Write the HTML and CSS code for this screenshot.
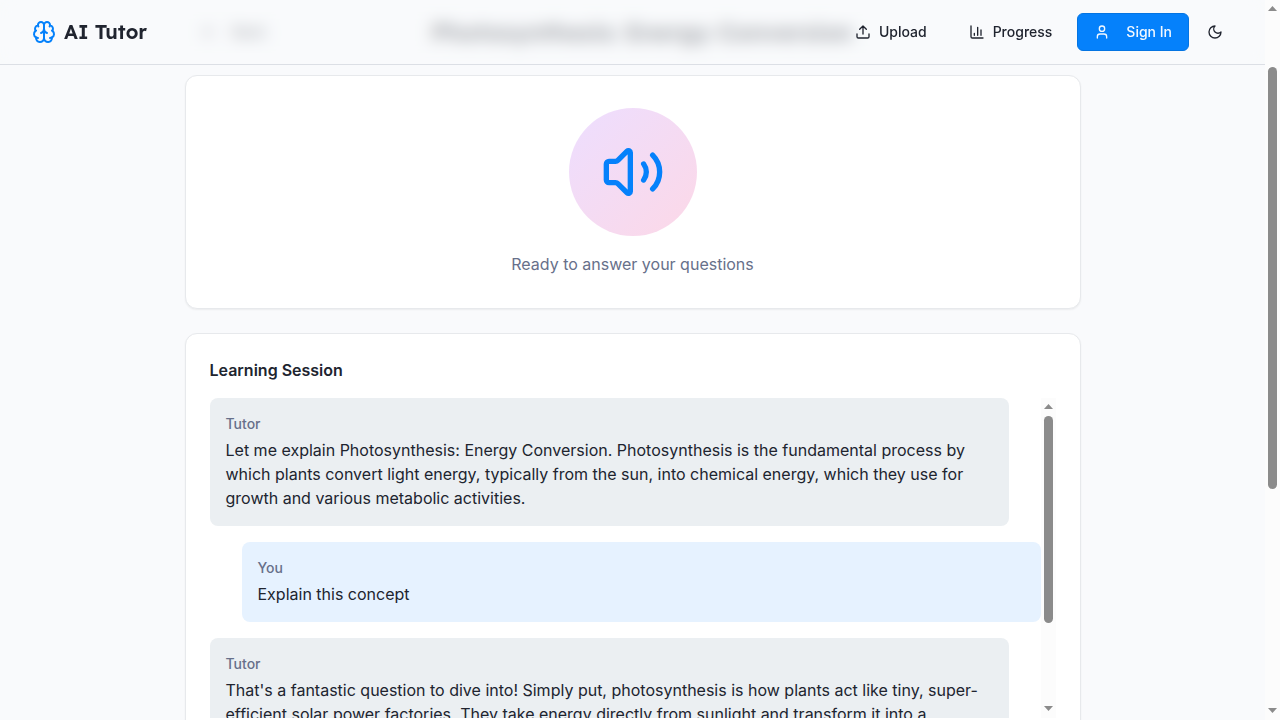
FILE: index.html
```html
<!DOCTYPE html>
<html lang="en">
<head>
<meta charset="utf-8">
<title>AI Tutor</title>
<link rel="stylesheet" href="styles.css">
</head>
<body>
<div class="window">
  <div class="page">
    <header class="header">
      <a class="brand">
        <svg class="icon brand-icon" viewBox="0 0 24 24"><path d="M12 5a3 3 0 1 0-5.997.125 4 4 0 0 0-2.526 5.77 4 4 0 0 0 .556 6.588A4 4 0 1 0 12 18Z"/><path d="M12 5a3 3 0 1 1 5.997.125 4 4 0 0 1 2.526 5.77 4 4 0 0 1-.556 6.588A4 4 0 1 1 12 18Z"/><path d="M15 13a4.5 4.5 0 0 1-3-4 4.5 4.5 0 0 1-3 4"/><path d="M17.599 6.5a3 3 0 0 0 .399-1.375"/><path d="M6.003 5.125A3 3 0 0 0 6.401 6.5"/><path d="M3.477 10.896a4 4 0 0 1 .585-.396"/><path d="M19.938 10.5a4 4 0 0 1 .585.396"/><path d="M6 18a4 4 0 0 1-1.967-.516"/><path d="M19.967 17.484A4 4 0 0 1 18 18"/></svg>
        <span class="brand-name">AI Tutor</span>
      </a>
      <nav class="nav">
        <a class="button"><svg class="icon" viewBox="0 0 24 24"><path d="M21 15v4a2 2 0 0 1-2 2H5a2 2 0 0 1-2-2v-4"/><path d="m17 8-5-5-5 5M12 3v12"/></svg>Upload</a>
        <a class="button"><svg class="icon" viewBox="0 0 24 24"><path d="M3 3v16a2 2 0 0 0 2 2h16"/><path d="M18 17V9M13 17V5M8 17v-3"/></svg>Progress</a>
        <a class="button primary"><svg class="icon" viewBox="0 0 24 24"><path d="M19 21v-2a4 4 0 0 0-4-4H9a4 4 0 0 0-4 4v2"/><circle cx="12" cy="7" r="4"/></svg>Sign In</a>
        <a class="theme"><svg class="icon" viewBox="0 0 24 24"><path d="M12 3a6 6 0 0 0 9 9 9 9 0 1 1-9-9Z"/></svg></a>
      </nav>
    </header>
    <main class="content">
      <div class="title-row">
        <a class="back"><svg class="icon" viewBox="0 0 24 24"><path d="m12 19-7-7 7-7M19 12H5"/></svg>Back</a>
        <h1 class="title">Photosynthesis: Energy Conversion</h1>
      </div>
      <section class="card status">
        <div class="speaker"><svg class="icon speaker-icon" viewBox="0 0 24 24"><path d="M11 4.702a.705.705 0 0 0-1.203-.498L6.413 7.587A1.4 1.4 0 0 1 5.416 8H3a1 1 0 0 0-1 1v6a1 1 0 0 0 1 1h2.416a1.4 1.4 0 0 1 .997.413l3.383 3.384A.705.705 0 0 0 11 19.298z"/><path d="M16 9a5 5 0 0 1 0 6"/><path d="M19.364 18.364a9 9 0 0 0 0-12.728"/></svg></div>
        <p class="status-text">Ready to answer your questions</p>
      </section>
      <section class="card session">
        <h2 class="session-title">Learning Session</h2>
        <div class="chat">
          <div class="messages">
            <div class="message tutor"><p class="author">Tutor</p><p class="text">Let me explain Photosynthesis: Energy Conversion. Photosynthesis is the fundamental process by which plants convert light energy, typically from the sun, into chemical energy, which they use for growth and various metabolic activities.</p></div>
            <div class="message you"><p class="author">You</p><p class="text">Explain this concept</p></div>
            <div class="message tutor"><p class="author">Tutor</p><p class="text">That's a fantastic question to dive into! Simply put, photosynthesis is how plants act like tiny, super-efficient solar power factories. They take energy directly from sunlight and transform it into a</p></div>
          </div>
          <div class="scrollbar chat-scrollbar"><i class="arrow up"></i><i class="thumb chat-thumb"></i><i class="arrow down"></i></div>
        </div>
      </section>
    </main>
  </div>
  <div class="scrollbar page-scrollbar"><i class="arrow up"></i><i class="thumb page-thumb"></i><i class="arrow down"></i></div>
</div>
</body>
</html>
```
FILE: styles.css
```css
* { box-sizing: border-box; }
body { margin: 0; font-family: Inter, "Liberation Sans", sans-serif; font-size: 16px; line-height: 24px; color: #20242f; background: #f9fafc; overflow: hidden; }
h1, h2, p { margin: 0; }
.window { display: flex; height: 720px; overflow: hidden; }
.page { flex: 1; min-width: 0; height: 720px; overflow: hidden; background: #f9fafc; }
.icon { width: 16px; height: 16px; flex: none; fill: none; stroke: currentColor; stroke-width: 2; stroke-linecap: round; stroke-linejoin: round; }
.header { position: sticky; top: 0; z-index: 2; display: flex; justify-content: space-between; align-items: center; height: 65px; padding: 0 32px; border-bottom: 1px solid #dcdfe5; background: rgba(249, 250, 252, .6); backdrop-filter: blur(8px); }
.brand { display: flex; align-items: center; gap: 8px; }
.brand-icon { width: 24px; height: 24px; color: #0581fb; }
.brand-name { font-family: Lexend, Inter, sans-serif; font-size: 20px; line-height: 28px; font-weight: 600; font-feature-settings: "cv08"; }
.nav { display: flex; align-items: center; gap: 8px; }
.button { display: flex; align-items: center; gap: 8px; height: 38px; padding: 0 16px; border: 1px solid transparent; border-radius: 6px; font-size: 14px; font-weight: 500; line-height: 20px; }
.primary { gap: 16px; color: #f2f8ff; background: #0581fb; border-color: #0474e2; }
.theme { display: flex; align-items: center; justify-content: center; width: 36px; height: 36px; }
.content { width: 896px; margin: -52px auto 0; }
.title-row { display: flex; justify-content: space-between; align-items: center; height: 38px; padding-left: 16px; margin-bottom: 24px; }
.back { display: flex; align-items: center; gap: 16px; font-size: 14px; font-weight: 500; }
.title { width: 649px; font-family: Lexend, Inter, sans-serif; font-size: 24px; line-height: 32px; font-weight: 600; white-space: nowrap; }
.card { background: #fff; border: 1px solid #e7e9ec; border-radius: 12px; box-shadow: 0 1px 2px rgba(0, 0, 0, .06); }
.status { display: flex; flex-direction: column; align-items: center; gap: 16px; padding: 32px; margin-bottom: 24px; }
.speaker { display: flex; align-items: center; justify-content: center; width: 128px; height: 128px; border-radius: 50%; background: linear-gradient(135deg, #eddeff, #fcd8e7); color: #0581fb; }
.speaker-icon { width: 64px; height: 64px; }
.status-text, .author { color: #67708a; }
.session { padding: 24px; }
.session-title { font-size: 16px; line-height: 24px; font-weight: 600; margin-bottom: 16px; }
.chat { display: flex; height: 320px; overflow: hidden; }
.messages { flex: 1; display: flex; flex-direction: column; gap: 16px; }
.message { flex: none; padding: 16px; border-radius: 8px; }
.tutor { background: #ebeff2; margin-right: 32px; }
.you { background: #e6f2ff; margin-left: 32px; }
.author { font-size: 14px; line-height: 20px; font-weight: 500; margin-bottom: 4px; }
.scrollbar { display: flex; flex-direction: column; align-items: center; flex: none; width: 15px; padding: 6px 0; background: #fcfcfc; }
.chat-scrollbar { margin-left: .5px; margin-right: -.5px; }
.page-scrollbar { height: 720px; }
.arrow { width: 9px; height: 5px; background: #8b8b8b; }
.up { clip-path: polygon(50% 0, 100% 100%, 0 100%); }
.down { clip-path: polygon(0 0, 100% 0, 50% 100%); margin-top: auto; margin-bottom: 1px; }
.thumb { width: 9px; border-radius: 5px; background: #8b8b8b; }
.chat-thumb { height: 207px; margin-top: 7px; }
.page-thumb { height: 422px; margin-top: 56px; }
```
